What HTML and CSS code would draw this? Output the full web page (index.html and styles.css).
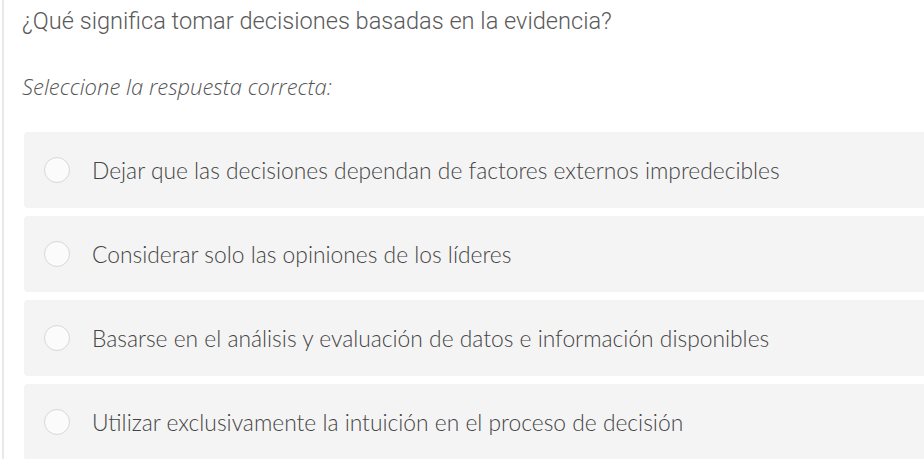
FILE: index.html
```html
<!DOCTYPE html>
<html lang="es">
<head>
<meta charset="utf-8">
<title>Pregunta</title>
<link rel="stylesheet" href="styles.css">
</head>
<body>
<div class="page">
  <p class="question">¿Qué significa tomar decisiones basadas en la evidencia?</p>
  <p class="hint">Seleccione la respuesta correcta:</p>
  <div class="options">
    <label class="option"><span class="radio"></span><span class="label">Dejar que las decisiones dependan de factores externos impredecibles</span></label>
    <label class="option"><span class="radio"></span><span class="label">Considerar solo las opiniones de los líderes</span></label>
    <label class="option"><span class="radio"></span><span class="label">Basarse en el análisis y evaluación de datos e información disponibles</span></label>
    <label class="option"><span class="radio"></span><span class="label">Utilizar exclusivamente la intuición en el proceso de decisión</span></label>
  </div>
</div>
</body>
</html>
```
FILE: styles.css
```css
html, body {
  margin: 0;
  padding: 0;
  background: #ffffff;
  overflow: hidden;
}
.page {
  margin-left: 2px;
  border-left: 2px solid #e9e9e9;
  padding: 7px 0 0 18px;
  height: 100vh;
  box-sizing: border-box;
}
.question {
  margin: 0;
  font-family: Roboto, "Liberation Sans", sans-serif;
  font-weight: 300;
  font-size: 23.6px;
  line-height: 28px;
  color: #5a5a5a;
  white-space: nowrap;
}
.hint {
  margin: 36px 0 0 0;
  font-family: "Open Sans", "Liberation Sans", sans-serif;
  font-style: italic;
  font-weight: 300;
  font-size: 22px;
  line-height: 30px;
  color: #555555;
}
.options {
  margin: 31px 0 0 2px;
  width: 1000px;
  display: flex;
  flex-direction: column;
  gap: 8px;
}
.option {
  display: flex;
  align-items: center;
  height: 76px;
  background: #f4f4f4;
  border-radius: 4px;
  padding-left: 20px;
}
.radio {
  width: 26px;
  height: 26px;
  box-sizing: border-box;
  border: 1px solid #d8d8d8;
  border-radius: 50%;
  background: #fbfbfb;
  flex: none;
}
.label {
  margin-left: 22px;
  font-family: Lato, "Liberation Sans", sans-serif;
  font-weight: 300;
  font-size: 22.8px;
  color: #444444;
  white-space: nowrap;
}
```
